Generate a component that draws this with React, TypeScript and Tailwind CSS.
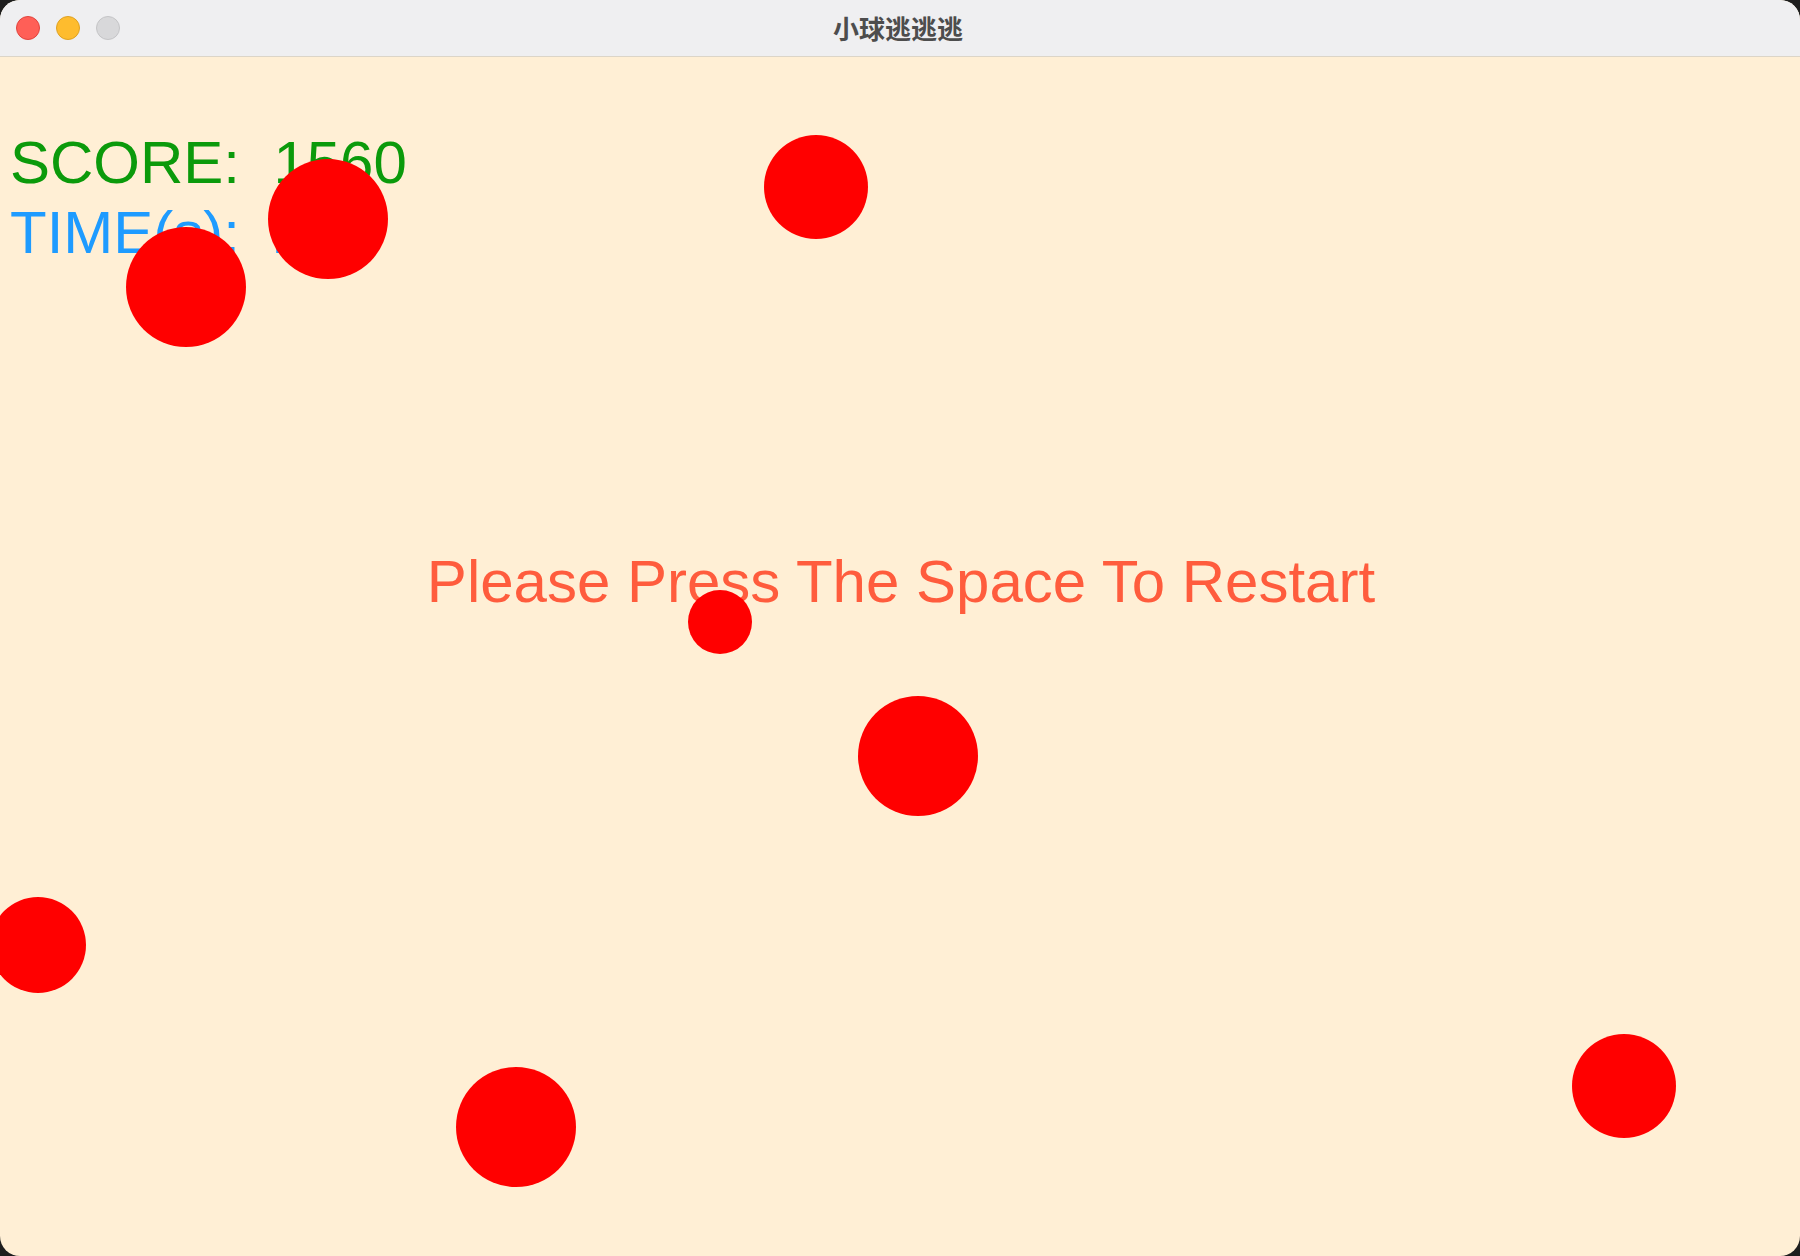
const balls = [
  { x: 816, y: 187, r: 52 },
  { x: 328, y: 219, r: 60 },
  { x: 186, y: 287, r: 60 },
  { x: 720, y: 622, r: 32 },
  { x: 918, y: 756, r: 60 },
  { x: 38, y: 945, r: 48 },
  { x: 516, y: 1127, r: 60 },
  { x: 1624, y: 1086, r: 52 },
];

const TITLE_H = 57;

function TrafficLights() {
  return (
    <div className="absolute left-[16px] top-[16px] flex items-center gap-[16px]">
      <span className="block size-[24px] rounded-full bg-[#ff5f57] border border-[#e0443e]" />
      <span className="block size-[24px] rounded-full bg-[#febc2e] border border-[#dea123]" />
      <span className="block size-[24px] rounded-full bg-[#d8d8da] border border-[#c4c4c6]" />
    </div>
  );
}

export default function App() {
  return (
    <div className="w-[1800px] h-[1256px] bg-[#1e1e1e] overflow-hidden">
      <div className="w-full h-full rounded-[20px] overflow-hidden flex flex-col bg-[#ffefd5]">
        <div
          className="relative h-[57px] shrink-0 bg-[#efeff1] border-b border-[#dcd5c8] flex items-center justify-center"
        >
          <TrafficLights />
          <span
            className="text-[26px] font-bold text-[#4d4d4d] leading-none ml-[-4px]"
            style={{ fontFamily: '"Noto Sans CJK SC", "Noto Sans", sans-serif' }}
          >
            小球逃逃逃
          </span>
        </div>

        <div
          className="relative flex-1 text-[60px] leading-[70px]"
          style={{ fontFamily: '"Liberation Sans", Arial, sans-serif' }}
        >
          <div className="pt-[71px] pl-[10px] whitespace-pre">
            <div className="text-[#0b9a0b]">SCORE:  1560</div>
            <div className="text-[#1e9bff]">TIME(s):  26</div>
          </div>

          <div className="mt-[279px] text-center text-[#ff5c3d] pl-[2px]">
            Please Press The Space To Restart
          </div>

          {balls.map((b, i) => (
            <span
              key={i}
              className="absolute rounded-full bg-[#ff0000]"
              style={{
                left: b.x - b.r,
                top: b.y - b.r - TITLE_H,
                width: b.r * 2,
                height: b.r * 2,
              }}
            />
          ))}
        </div>
      </div>
    </div>
  );
}
